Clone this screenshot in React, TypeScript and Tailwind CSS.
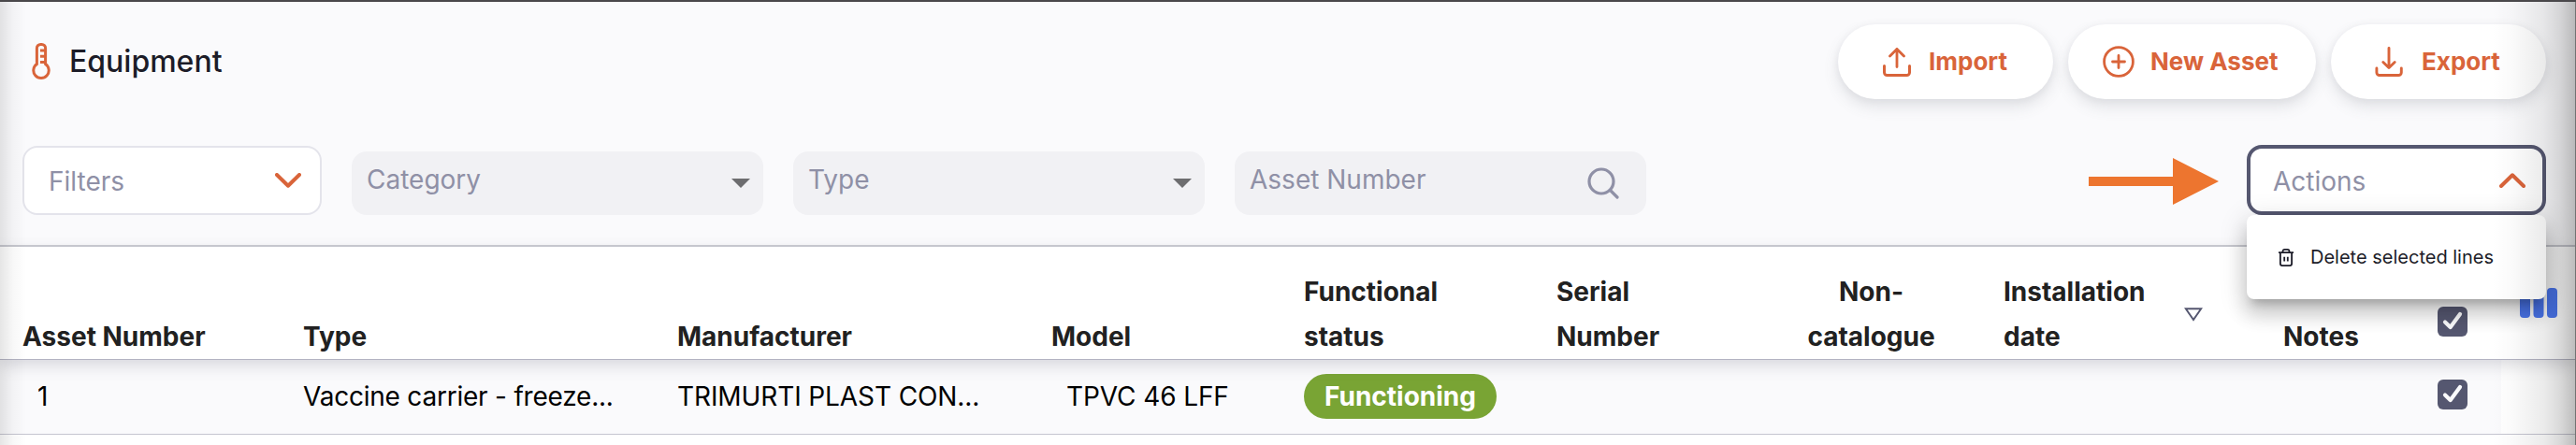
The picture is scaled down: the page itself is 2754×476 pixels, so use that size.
import React from "react";

function Thermometer() {
  return (
    <svg width="20" height="40" viewBox="0 0 20 40" fill="none" stroke="#d9643a" strokeWidth="3">
      <path d="M5.4 22.6V5.5a4 4 0 0 1 4-4h1.2a4 4 0 0 1 4 4v17.1a8.2 8.2 0 1 1-9.2 0z" />
      <path d="M9 8h5M9 14.2h5M9 20.4h5" />
    </svg>
  );
}

function Chevron({ up = false }: { up?: boolean }) {
  return (
    <svg width="28" height="16" viewBox="0 0 28 16" fill="none" stroke="#d9643a" strokeWidth="4" strokeLinecap="round" strokeLinejoin="round">
      <path d={up ? "M2 14 14 2.3 26 14" : "M2 2l12 11.7L26 2"} />
    </svg>
  );
}

function ImportIcon() {
  return (
    <svg width="30" height="32" viewBox="0 0 30 32" fill="none" stroke="#d9643a" strokeWidth="3" strokeLinecap="round" strokeLinejoin="round">
      <path strokeWidth="2.8" d="M15 21.5V2.5M7.500 10 15 2.5l7.500 7.500" />
      <path d="M1.500 20.500v7a3 3 0 0 0 3 3h21a3 3 0 0 0 3-3v-7" />
    </svg>
  );
}

function PlusCircle() {
  return (
    <svg width="34" height="34" viewBox="0 0 34 34" fill="none" stroke="#d9643a" strokeWidth="2.8" strokeLinecap="round">
      <circle cx="17" cy="17" r="15.4" />
      <path d="M17 10.500v13M10.500 17h13" />
    </svg>
  );
}

function ExportIcon() {
  return (
    <svg width="30" height="32" viewBox="0 0 30 32" fill="none" stroke="#d9643a" strokeWidth="2.9" strokeLinecap="round" strokeLinejoin="round">
      <path d="M15 1.500V22M8.800 16.500 15 22.500l6.200-6" />
      <path d="M1.900 23v4.500a3 3 0 0 0 3 3h20.400a3 3 0 0 0 3-3V23" />
    </svg>
  );
}

function PillButton({ icon, label, className }: { icon: React.ReactNode; label: string; className: string }) {
  return (
    <button
      className={
        "flex h-20 items-center rounded-full bg-white text-[26px] font-bold text-[#d9643a] shadow-[0_8px_16px_rgba(96,97,112,0.16),0_1px_8px_rgba(40,41,61,0.05)] " +
        className
      }
    >
      {icon}
      <span className="pb-[2px] whitespace-nowrap">{label}</span>
    </button>
  );
}

function FilterSelect({ label }: { label: string }) {
  return (
    <div className="flex h-[68px] w-[440px] items-center justify-between rounded-2xl bg-[#f1f1f4] pr-[14px] pl-4">
      <span className="pb-2">{label}</span>
      <svg width="20" height="10" viewBox="0 0 20 10" fill="#6d6d6f">
        <path d="M0 0h20L10 10z" />
      </svg>
    </div>
  );
}

function Checkbox() {
  return (
    <svg width="32" height="32" viewBox="0 0 32 32" fill="none">
      <rect width="32" height="32" rx="6" fill="#555770" />
      <path d="M8 16.500 13.700 22 24 8" stroke="#fafafc" strokeWidth="4.200" strokeLinecap="round" strokeLinejoin="round" />
    </svg>
  );
}

function Trash() {
  return (
    <svg width="16" height="19" viewBox="0 0 16 19" fill="none" stroke="#1c1c28" strokeWidth="1.800">
      <path d="M0 4.200h16M4.500 4V2.900a2 2 0 0 1 2-2h3a2 2 0 0 1 2 2V4" />
      <path d="M1.900 4.200v11.900a2 2 0 0 0 2 2h8.200a2 2 0 0 0 2-2V4.200M6.200 8.800v4.800M9.800 8.800v4.800" />
    </svg>
  );
}

function ActionsMenu() {
  return (
    <div className="relative">
      <div className="flex h-[75px] w-[320px] items-center justify-between rounded-2xl border-4 border-[#555770] bg-white pr-[18px] pl-6">
        <span className="pt-[2px]">Actions</span>
        <Chevron up />
      </div>
      <div className="absolute top-[75px] left-0 z-10 flex h-[90px] w-[320px] items-center rounded-lg bg-white pl-[34px] text-xl text-[#1c1c28] shadow-[0_10px_10px_-6px_rgba(0,0,0,0.2),0_16px_20px_2px_rgba(0,0,0,0.14),0_6px_28px_4px_rgba(0,0,0,0.12)]">
        <Trash />
        <span className="ml-[18px] whitespace-nowrap">Delete selected lines</span>
      </div>
    </div>
  );
}

const columns =
  "grid grid-cols-[300px_400px_400px_270px_270px_239px_239px_299px_165px_148px] pl-6";

export default function App() {
  return (
    <div className="relative h-[476px] w-[2754px] overflow-hidden bg-white font-[Inter,sans-serif]">
      <div className="h-[264px] border-t-2 border-b-2 border-t-[#4a484b] border-b-[#cbccd3] bg-[#fafafc] pr-8 pl-6">
        <div className="flex items-center justify-between pt-6">
          <div className="flex items-center pl-[10px]">
            <Thermometer />
            <h1 className="ml-5 text-[32px] font-medium text-[#1c1c28]">Equipment</h1>
          </div>
          <div className="flex gap-4">
            <PillButton icon={<ImportIcon />} label="Import" className="w-[230px] gap-[19px] pl-12" />
            <PillButton icon={<PlusCircle />} label="New Asset" className="w-[265px] gap-[17px] pl-[37px]" />
            <PillButton icon={<ExportIcon />} label="Export" className="w-[230px] gap-5 pl-[47px]" />
          </div>
        </div>

        <div className="mt-[49px] flex items-end justify-between text-[28px] text-[#8f90a6]">
          <div className="flex items-end gap-8">
            <div className="flex h-[74px] w-[320px] items-center justify-between rounded-2xl border-2 border-[#e4e4eb] bg-white pr-5 pl-[26px]">
              <span className="pt-[2px]">Filters</span>
              <Chevron />
            </div>
            <FilterSelect label="Category" />
            <FilterSelect label="Type" />
            <div className="flex h-[68px] w-[440px] items-center justify-between rounded-2xl bg-[#f1f1f4] pr-[29px] pl-4">
              <span className="pb-2">Asset Number</span>
              <svg width="34" height="34" viewBox="0 0 34 34" fill="none" stroke="#8f90a6" strokeWidth="3.200" strokeLinecap="round">
                <circle cx="15" cy="15" r="13" />
                <path d="M24.500 24.500 32 32" />
              </svg>
            </div>
          </div>
          <div className="flex items-center gap-[30px]">
            <svg className="mt-[2px]" width="139" height="50" viewBox="0 0 139 50" fill="#ed752f">
              <path d="M0 20h90V0l49 25-49 25V30H0z" />
            </svg>
            <ActionsMenu />
          </div>
        </div>
      </div>

      <div className={"relative h-[121px] items-end border-b border-[#b3b3c2] bg-white text-[28px] leading-[48px] font-bold text-[#212121] shadow-[0_6px_16px_rgba(96,97,112,0.22)] " + columns}>
        <div>Asset Number</div>
        <div>Type</div>
        <div>Manufacturer</div>
        <div>Model</div>
        <div>Functional<br />status</div>
        <div>Serial<br />Number</div>
        <div className="w-[195px] text-center">Non-<br />catalogue</div>
        <div className="flex items-center">
          <div className="w-[193px]">Installation<br />date</div>
          <svg width="20" height="15" viewBox="0 0 20 15" fill="none" stroke="#555770" strokeWidth="2">
            <path d="M1.800 1.200h16.400L10 13z" />
          </svg>
        </div>
        <div>Notes</div>
        <div className="flex items-end pb-6">
          <Checkbox />
          <svg className="mb-5 ml-14" width="40" height="32" viewBox="0 0 40 32" fill="#4c78f2">
            <rect width="11" height="32" rx="4" />
            <rect x="14.500" width="11" height="32" rx="4" />
            <rect x="29" width="11" height="32" rx="4" />
          </svg>
        </div>
      </div>

      <div className="flex h-20 w-full border-b border-[#c5c5d0]">
        <div className={"h-full w-[2674px] items-center bg-[#fafafc] pb-[2px] text-[28px] text-black " + columns}>
          <div className="pl-4">1</div>
          <div className="tracking-[-0.22px]">Vaccine carrier - freeze...</div>
          <div className="tracking-[-0.1px]">TRIMURTI PLAST CON...</div>
          <div className="pl-4 tracking-[-0.1px]">TPVC 46 LFF</div>
          <div>
            <span className="flex h-12 w-[206px] items-center justify-center rounded-full bg-[#79a434] font-bold text-white">
              Functioning
            </span>
          </div>
          <div />
          <div />
          <div />
          <div />
          <div className="pb-[3px]">
            <Checkbox />
          </div>
        </div>
      </div>

      <div className="pointer-events-none absolute top-[2px] bottom-0 left-0 z-20 w-7 bg-linear-to-r from-black/10 via-black/3 to-transparent" />
      <div className="pointer-events-none absolute top-[2px] right-0 bottom-0 z-20 w-[90px] border-r border-[#727272] bg-[linear-gradient(to_left,rgba(0,0,0,0.26),rgba(0,0,0,0.15)_18%,rgba(0,0,0,0.08)_38%,rgba(0,0,0,0.02)_75%,transparent)]" />
    </div>
  );
}
